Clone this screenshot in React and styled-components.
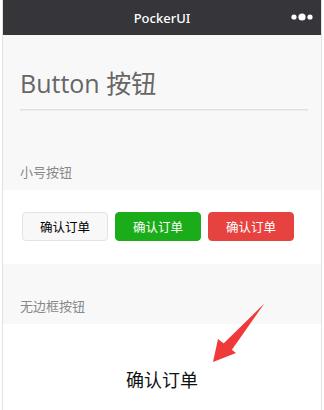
import React from "react";
import styled, { createGlobalStyle } from "styled-components";

const Global = createGlobalStyle`
  html, body {
    margin: 0;
    padding: 0;
    background: #fff;
  }
  body {
    font-family: "Open Sans", "Noto Sans CJK SC", sans-serif;
  }
`;

const Dots = () => (
  <svg width="22" height="10" viewBox="0 0 22 10">
    <circle cx="3" cy="5" r="2.6" fill="#fff" />
    <circle cx="11" cy="5" r="3.6" fill="#fff" />
    <circle cx="19" cy="5" r="2.6" fill="#fff" />
  </svg>
);

const Arrow = () => (
  <ArrowWrap width="60" height="64" viewBox="0 0 60 64">
    <path d="M55 2 L18 46 L14 42 Z" fill="#f03a3a" />
    <path d="M4 60 L9 37 L27 51 Z" fill="#f03a3a" />
    <path d="M55 2 L22 49 L15 43 Z" fill="#f03a3a" />
  </ArrowWrap>
);

const App = () => {
  return (
    <>
      <Global />
      <Frame>
        <Header>
          <HeaderTitle>PockerUI</HeaderTitle>
          <Menu>
            <Dots />
          </Menu>
        </Header>
        <PageHead>
          <h1>Button 按钮</h1>
        </PageHead>
        <SectionTitle top={52}>小号按钮</SectionTitle>
        <Panel>
          <Btn>确认订单</Btn>
          <Btn kind="primary">确认订单</Btn>
          <Btn kind="warn">确认订单</Btn>
        </Panel>
        <SectionTitle top={32}>无边框按钮</SectionTitle>
        <PlainPanel>
          <PlainBtn>确认订单</PlainBtn>
          <Arrow />
        </PlainPanel>
      </Frame>
    </>
  );
};

export default App;

const Frame = styled.div`
  margin-left: 2px;
  width: 318px;
  height: 410px;
  border-left: 1px solid #e2e2e2;
  border-right: 1px solid #e2e2e2;
  background: #f8f8f8;
  overflow: hidden;
`;

const Header = styled.div`
  height: 35px;
  background: #363539;
  display: flex;
  align-items: center;
  justify-content: center;
  position: relative;
`;

const HeaderTitle = styled.div`
  color: #fff;
  font-size: 13px;
  font-family: "Noto Sans", sans-serif;
  font-weight: 500;
`;

const Menu = styled.div`
  position: absolute;
  right: 8px;
  top: 12px;
  display: flex;
`;

const PageHead = styled.div`
  padding: 29px 13px 0 17px;

  h1 {
    margin: 0;
    font-weight: 400;
    font-size: 25px;
    line-height: 38px;
    color: #666;
    font-family: "Open Sans", "Noto Sans CJK SC", sans-serif;
    padding-bottom: 7px;
    border-bottom: 1px solid #e0e0e0;
    box-shadow: 0 1px 1px rgba(0, 0, 0, 0.04);
  }
`;

const SectionTitle = styled.div`
  padding: ${(p) => p.top}px 17px 8px;
  height: 20px;
  font-size: 13px;
  color: #888;
  font-family: "Noto Sans CJK SC", sans-serif;
  line-height: 20px;
`;

const Panel = styled.div`
  background: #fff;
  padding: 22px 0 23px 19px;
  display: flex;
  gap: 7px;
`;

const Btn = styled.button`
  width: 86px;
  height: 29px;
  border-radius: 4px;
  font-family: "Noto Sans CJK SC", sans-serif;
  font-size: 12.5px;
  padding: 0;
  cursor: pointer;
  border: 1px solid
    ${(p) =>
      p.kind === "primary" ? "#1aad19" : p.kind === "warn" ? "#e64340" : "#e3e3e3"};
  background: ${(p) =>
    p.kind === "primary" ? "#1aad19" : p.kind === "warn" ? "#e64340" : "#f8f8f8"};
  color: ${(p) => (p.kind ? "#fff" : "#000")};
`;

const PlainPanel = styled.div`
  position: relative;
  background: #fff;
  height: 100px;
  display: flex;
  justify-content: center;
  padding-top: 43px;
  box-sizing: border-box;
`;

const PlainBtn = styled.div`
  font-family: "Noto Sans CJK SC", sans-serif;
  font-size: 18px;
  color: #111;
  line-height: 24px;
`;

const ArrowWrap = styled.svg`
  position: absolute;
  left: 206px;
  top: -22px;
`;
